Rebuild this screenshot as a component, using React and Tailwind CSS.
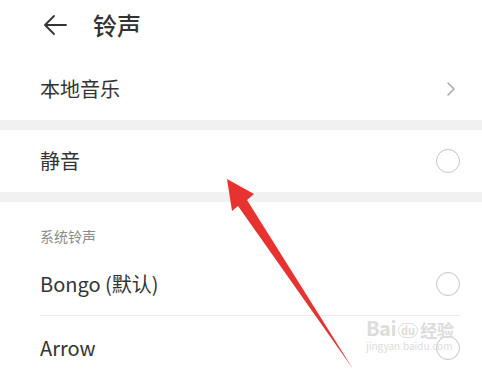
import React from 'react';

const Radio = () => (
  <span className="block w-[24px] h-[24px] rounded-full border-[1.5px] border-[#c4c4c4]" />
);

const App = () => {
  return (
    <div
      className="relative w-[482px] h-[375px] overflow-hidden bg-white text-[#333]"
      style={{ fontFamily: '"Noto Sans CJK SC", "Noto Sans", sans-serif' }}
    >
      {/* header */}
      <div className="h-[48px] flex items-center pl-[43px] pt-[1px]">
        <svg width="24" height="22" viewBox="0 0 24 22" fill="none" stroke="#333" strokeWidth="1.8" strokeLinecap="round" strokeLinejoin="round">
          <path d="M23 11H2M11 2L2 11l9 9" />
        </svg>
        <h1 className="ml-[26px] text-[24px] leading-none font-medium">铃声</h1>
      </div>

      {/* local music */}
      <div className="h-[72px] flex items-center justify-between pl-[40px] pr-[27px] pt-[10px]">
        <span className="text-[20px]">本地音乐</span>
        <svg width="8" height="14" viewBox="0 0 8 14" fill="none" stroke="#a8a8a8" strokeWidth="1.5" strokeLinecap="round" strokeLinejoin="round">
          <path d="M1 1l6 6-6 6" />
        </svg>
      </div>
      <div className="h-[10px] bg-[#f1f1f1]" />

      {/* mute */}
      <div className="h-[62px] flex items-center justify-between pl-[40px] pr-[22px]">
        <span className="text-[20px]">静音</span>
        <Radio />
      </div>
      <div className="h-[10px] bg-[#f1f1f1]" />

      {/* system ringtones */}
      <div className="h-[50px] pl-[40px] pt-[24px]">
        <span className="block text-[14px] leading-5 text-[#8a8a8a]">系统铃声</span>
      </div>
      <div className="pl-[40px] pr-[22px]">
        <div className="h-[64px] flex items-center justify-between border-b border-[#ececec]">
          <span className="text-[20px]">Bongo (默认)</span>
          <Radio />
        </div>
        <div className="h-[64px] flex items-center justify-between">
          <span className="text-[20px]">Arrow</span>
          <Radio />
        </div>
      </div>

      {/* watermark */}
      <div className="absolute left-[366px] top-[318px] flex flex-col items-start leading-none text-[#dcdcdc]">
        <div className="flex items-end gap-[2px]">
          <span className="text-[20px] font-bold tracking-tight">Bai</span>
          <span className="text-[11px] font-bold rounded-full border border-[#dcdcdc] px-[2px] py-[1px]">du</span>
          <span className="text-[17px] font-bold">经验</span>
        </div>
        <span className="mt-[3px] text-[10px]">jingyan.baidu.com</span>
      </div>

      {/* red arrow */}
      <svg className="absolute left-0 top-0" width="482" height="375" viewBox="0 0 482 375">
        <polygon
          points="227,179 254,194 247,200 353,369 238,206 232,211"
          fill="#e8322f"
        />
      </svg>
    </div>
  );
};

export default App;
